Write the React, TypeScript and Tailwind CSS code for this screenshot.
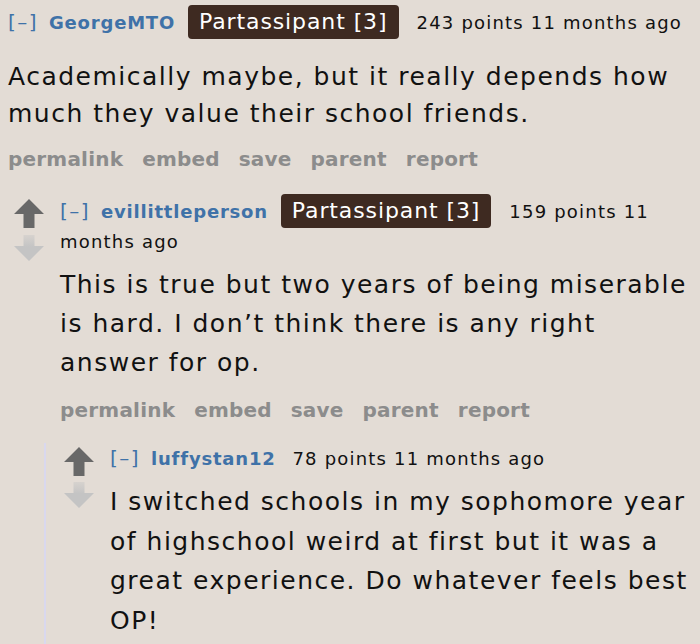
import React from "react";

const UpArrow = () => (
  <svg width="30" height="29" viewBox="0 0 30 29" className="block">
    <polygon points="15,0 30,15 20.5,15 20.5,29 9.5,29 9.5,15 0,15" fill="#686868" />
  </svg>
);

const DownArrow = ({ id }: { id: string }) => (
  <svg width="30" height="26" viewBox="0 0 30 26" className="block">
    <defs>
      <linearGradient id={id} x1="0" y1="0" x2="0" y2="1">
        <stop offset="0" stopColor="#c4c4c4" stopOpacity="0.4" />
        <stop offset="0.45" stopColor="#c4c4c4" stopOpacity="1" />
        <stop offset="1" stopColor="#c4c4c4" stopOpacity="1" />
      </linearGradient>
    </defs>
    <polygon points="9.5,0 20.5,0 20.5,11 30,11 15,26 0,11 9.5,11" fill={`url(#${id})`} />
  </svg>
);

const Badge = () => (
  <span className="inline-block align-baseline bg-[#3e2a21] text-white text-[22px] leading-[24px] tracking-[0.9px] px-[11px] py-[5px] -my-[2px] rounded-[4px] ml-[6px] mr-[18px]">
    Partassipant [3]
  </span>
);

const Actions = () => (
  <div className="flex gap-[19px] text-[20px] font-bold tracking-[0.2px] text-[#8c8c8c] leading-[24px]">
    <span>permalink</span>
    <span>embed</span>
    <span>save</span>
    <span>parent</span>
    <span>report</span>
  </div>
);

const Author = ({ name }: { name: string }) => (
  <>
    <span className="text-[#3f72a8] text-[20px] tracking-[1.5px]">[–]</span>{" "}
    <span className="text-[#3f72a8] font-bold tracking-[0.8px] ml-[4px]">{name}</span>
  </>
);

export default function App() {
  return (
    <div
      className="w-[700px] h-[644px] overflow-hidden bg-[#e3dcd5] text-[#111]"
      style={{ fontFamily: '"DejaVu Sans", Verdana, sans-serif' }}
    >
      {/* Comment 1 */}
      <div className="pl-[8px] pt-[7px]">
        <div className="text-[18px] leading-[30px] tracking-[1.2px]">
          <Author name="GeorgeMTO" /> <Badge /><span>243 points 11 months ago</span>
        </div>
        <div className="mt-[20px] text-[25px] leading-[37px] tracking-[1.5px]">
          Academically maybe, but it really depends how much they value their school friends.
        </div>
        <div className="mt-[15px]">
          <Actions />
        </div>
      </div>

      {/* Comment 2 */}
      <div className="flex pl-[14px] mt-[25px]">
        <div className="w-[46px] shrink-0 flex flex-col gap-[7px] pt-[3px]">
          <UpArrow />
          <DownArrow id="d1" />
        </div>
        <div className="flex-1">
          <div className="text-[18px] leading-[30px] tracking-[1.2px]">
            <Author name="evillittleperson" /> <Badge /><span>159 points 11</span> <span>months ago</span>
          </div>
          <div className="mt-[8px] text-[25px] leading-[39px] tracking-[1.5px]">
            This is true but two years of being miserable is hard. I don’t think there is any right answer for op.
          </div>
          <div className="mt-[16px]">
            <Actions />
          </div>

          {/* Comment 3 */}
          <div className="-ml-[16px] mt-[21px] border-l-2 border-[#d9d8ee] flex pl-[18px] pb-[40px]">
            <div className="w-[46px] shrink-0 flex flex-col gap-[6px] pt-[4px]">
              <UpArrow />
              <DownArrow id="d2" />
            </div>
            <div className="flex-1">
              <div className="text-[18px] leading-[30px] tracking-[1.2px]">
                <Author name="luffystan12" /> <span className="ml-[10px]">78 points 11 months ago</span>
              </div>
              <div className="mt-[8px] text-[25px] leading-[39.5px] tracking-[1.5px]">
                I switched schools in my sophomore year of highschool weird at first but it was a great experience. Do whatever feels best OP!
              </div>
            </div>
          </div>
        </div>
      </div>
    </div>
  );
}
